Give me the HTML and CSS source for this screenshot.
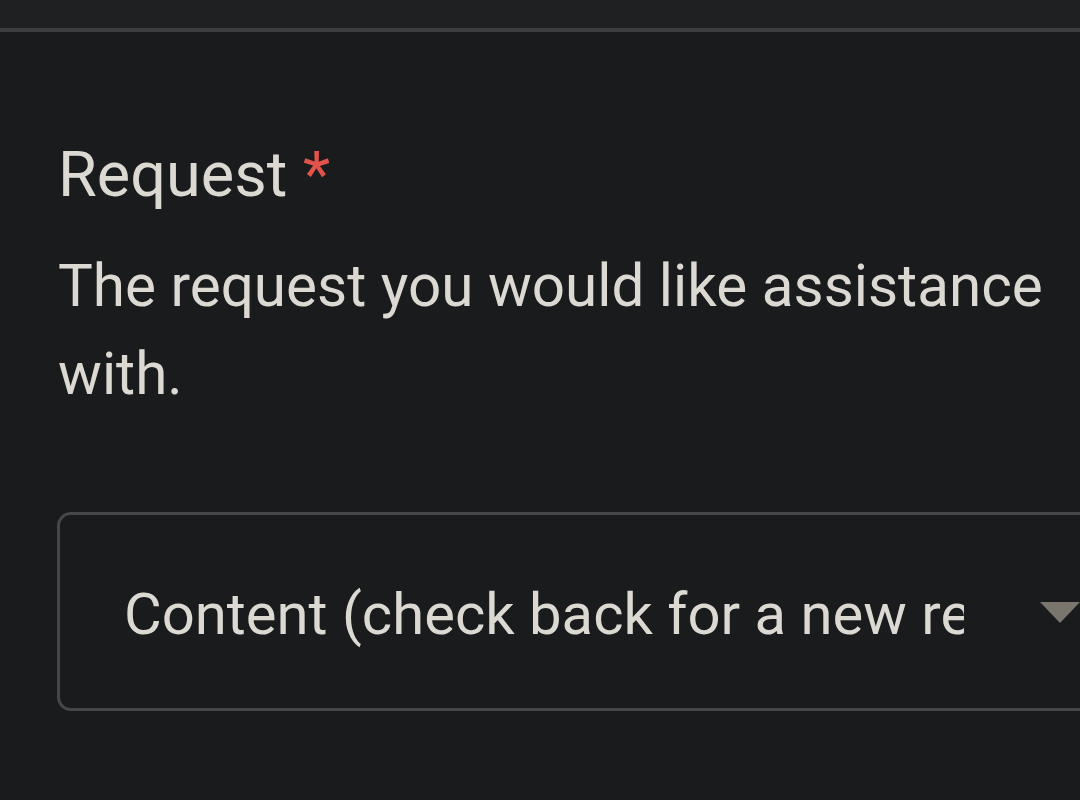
FILE: index.html
```html
<!DOCTYPE html>
<html>
<head>
<meta charset="utf-8">
<link rel="stylesheet" href="styles.css">
</head>
<body>
<div class="topbar"></div>
<main class="content">
  <div class="field">
    <div class="label">Request <span class="req">*</span></div>
    <div class="desc">The request you would like assistance with.</div>
    <div class="select">
      <span class="select-text">Content (check back for a new request type soon)</span>
      <span class="arrow"></span>
    </div>
  </div>
</main>
</body>
</html>
```

FILE: styles.css
```css
html, body {
  margin: 0;
  padding: 0;
  background: #1a1b1d;
  width: 1080px;
  height: 800px;
  overflow: hidden;
  font-family: Roboto, "Noto Sans", sans-serif;
}
.topbar {
  height: 28px;
  background: #1e2022;
  border-bottom: 4px solid #3c3f41;
}
.content {
  padding: 103px 0 0 58px;
  overflow: hidden;
}
.label {
  font-size: 63px;
  line-height: 80px;
  color: #dcd9d3;
}
.req {
  color: #e2534c;
}
.desc {
  margin-top: 27px;
  font-size: 58.4px;
  line-height: 88px;
  color: #dcd9d3;
  width: 1010px;
}
.select {
  margin-top: 94px;
  margin-left: -1px;
  width: 1100px;
  height: 199px;
  box-sizing: border-box;
  border: 3px solid #45484b;
  border-radius: 14px;
  display: flex;
  align-items: center;
  padding-left: 64px;
}
.select-text {
  width: 840px;
  overflow: hidden;
  white-space: nowrap;
  font-size: 58px;
  line-height: 70px;
  padding-top: 4px;
  color: #dcd9d3;
}
.arrow {
  margin-left: 76px;
  margin-top: 2px;
  width: 0;
  height: 0;
  border-left: 20px solid transparent;
  border-right: 20px solid transparent;
  border-top: 21px solid #7a766d;
}
```
